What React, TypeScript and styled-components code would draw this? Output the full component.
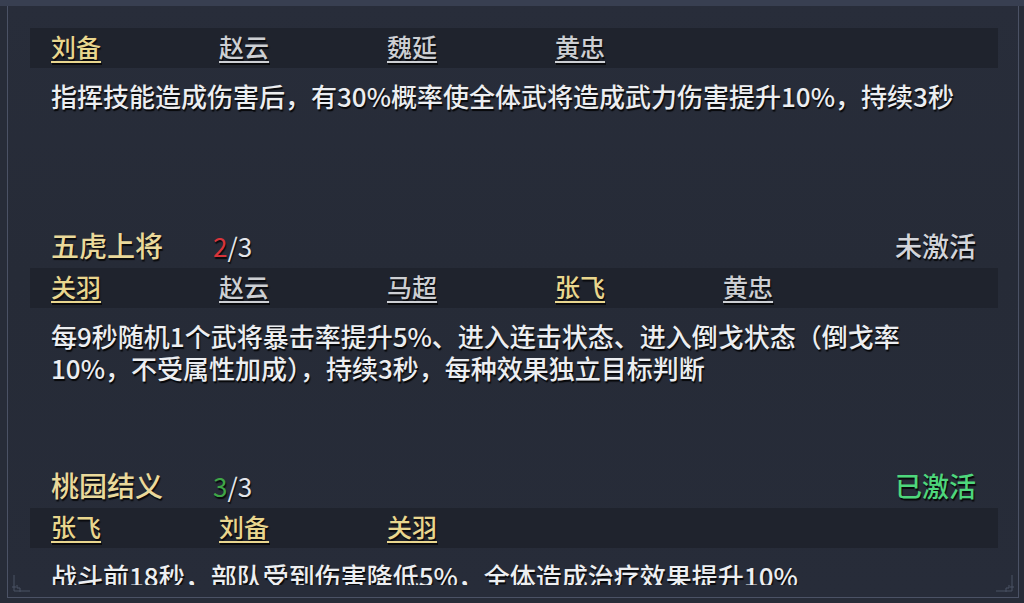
import React from 'react';
import styled, {createGlobalStyle} from 'styled-components';

const GlobalStyle = createGlobalStyle`
  html, body {
    margin: 0;
    padding: 0;
    background: #272c38;
  }

  body {
    font-family: "Noto Sans CJK SC", "Noto Sans", sans-serif;
  }
`;

const Frame = styled.div`
  display: flex;
  box-sizing: border-box;
  width: 1024px;
  height: 603px;
  padding: 0 5px 5px 7px;

  background: #272c38;
  border-top: 6px solid #383f51;
`;

const Panel = styled.div`
  position: relative;
  display: flex;
  flex-direction: column;
  flex: 1;
  min-height: 0;
  box-sizing: border-box;
  padding-bottom: 12px;

  border-left: 1px solid #4b5265;
  border-right: 1px solid #4b5265;
  border-bottom: 1px solid #4b5265;
  background: linear-gradient(180deg, #282d3a 0%, #262b37 45%, #272c39 100%);
`;

const List = styled.div`
  flex: 1;
  min-height: 0;
  overflow: hidden;
  padding: 22px 20px 0 22px;
`;

const Header = styled.div`
  display: flex;
  align-items: center;
  height: 40px;
  padding: 0 22px 6px 21px;
  box-sizing: border-box;
`;

const Title = styled.span`
  width: 162px;

  font-size: 28px;
  font-weight: 500;
  color: #ead99b;
  text-shadow: 1px 2px 1px rgba(0, 0, 0, 0.75);
`;

const Count = styled.span`
  font-size: 26px;
  color: #e4e6ea;
  text-shadow: 1px 2px 1px rgba(0, 0, 0, 0.75);
`;

const Got = styled.span<{$full: boolean}>`
  color: ${({$full}) => $full ? `#3fa647` : `#d8343a`};
`;

const Status = styled.span<{$active: boolean}>`
  margin-left: auto;

  font-size: 27px;
  font-weight: 500;
  color: ${({$active}) => $active ? `#4ed77c` : `#d3d5da`};
  text-shadow: 1px 2px 1px rgba(0, 0, 0, 0.8);
`;

const Band = styled.div`
  display: flex;
  align-items: center;
  height: 40px;
  box-sizing: border-box;
  padding: 0 0 3px 21px;

  background: #1f232d;
`;

const Hero = styled.span<{$owned: boolean}>`
  width: 168px;

  font-size: 25px;
  font-weight: 500;
  line-height: 1;
  color: ${({$owned}) => $owned ? `#e9d68e` : `#cdcfd3`};
  text-decoration: underline;
  text-decoration-thickness: 2px;
  text-underline-offset: 4px;
  text-shadow: 1px 2px 1px rgba(0, 0, 0, 0.7);
`;

const Desc = styled.div`
  height: 160px;
  box-sizing: border-box;
  padding: 12px 0 0 21px;

  font-size: 26px;
  font-weight: 500;
  line-height: 32px;
  color: #eceef1;
  text-shadow: 1px 2px 1px rgba(0, 0, 0, 0.85);
`;

const Corner = styled.svg<{$right?: boolean}>`
  position: absolute;
  bottom: 2px;
  ${({$right}) => $right ? `right: 2px; transform: scaleX(-1);` : `left: 2px;`}
  width: 22px;
  height: 22px;
`;

interface Hero {
  name: string,
  owned: boolean,
}

interface Bond {
  title?: string,
  got?: number,
  need?: number,
  heroes: Hero[],
  lines: string[],
}

const bonds: Bond[] = [
  {
    heroes: [
      {name: `刘备`, owned: true},
      {name: `赵云`, owned: false},
      {name: `魏延`, owned: false},
      {name: `黄忠`, owned: false},
    ],
    lines: [`指挥技能造成伤害后，有30%概率使全体武将造成武力伤害提升10%，持续3秒`],
  },
  {
    title: `五虎上将`,
    got: 2,
    need: 3,
    heroes: [
      {name: `关羽`, owned: true},
      {name: `赵云`, owned: false},
      {name: `马超`, owned: false},
      {name: `张飞`, owned: true},
      {name: `黄忠`, owned: false},
    ],
    lines: [
      `每9秒随机1个武将暴击率提升5%、进入连击状态、进入倒戈状态（倒戈率`,
      `10%，不受属性加成），持续3秒，每种效果独立目标判断`,
    ],
  },
  {
    title: `桃园结义`,
    got: 3,
    need: 3,
    heroes: [
      {name: `张飞`, owned: true},
      {name: `刘备`, owned: true},
      {name: `关羽`, owned: true},
    ],
    lines: [`战斗前18秒，部队受到伤害降低5%，全体造成治疗效果提升10%`],
  },
];

const CornerMark: React.FunctionComponent<{right?: boolean}> = ({right}) => (
  <Corner $right={right} viewBox="0 0 22 22" fill="none" stroke="#4b5265" strokeWidth="1">
    <path d="M4 2 V18 H20" />
    <path d="M7 12 V15 H10 V19" />
    <path d="M2 14 H6" />
  </Corner>
);

const App: React.FunctionComponent = () => {
  return (
    <>
      <GlobalStyle />
      <Frame>
        <Panel>
          <List>
            {bonds.map((bond, i) => {
              const full = (bond.got ?? 0) >= (bond.need ?? 0);
              return (
                <section key={i}>
                  {bond.title && (
                    <Header>
                      <Title>{bond.title}</Title>
                      <Count><Got $full={full}>{bond.got}</Got>/{bond.need}</Count>
                      <Status $active={full}>{full ? `已激活` : `未激活`}</Status>
                    </Header>
                  )}
                  <Band>
                    {bond.heroes.map((hero, j) => (
                      <Hero key={j} $owned={hero.owned}>{hero.name}</Hero>
                    ))}
                  </Band>
                  <Desc>
                    {bond.lines.map((line, j) => <div key={j}>{line}</div>)}
                  </Desc>
                </section>
              );
            })}
          </List>
          <CornerMark />
          <CornerMark right />
        </Panel>
      </Frame>
    </>
  );
};

export default App;
